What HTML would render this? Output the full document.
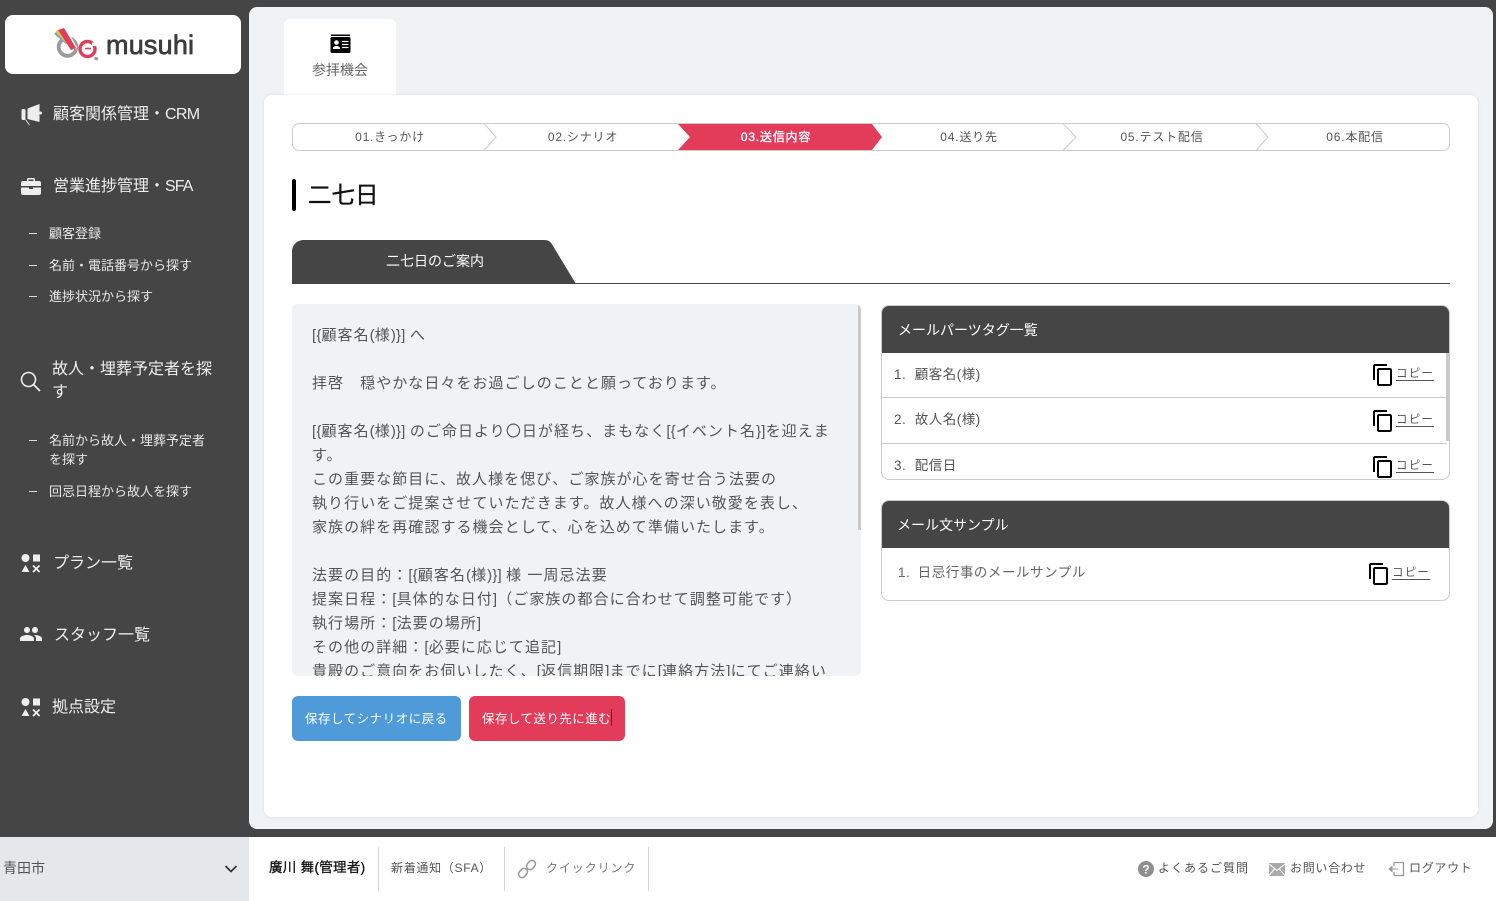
<!DOCTYPE html>
<html lang="ja">
<head>
<meta charset="utf-8">
<title>musuhi</title>
<style>
html,body{margin:0;padding:0}
body{width:1496px;height:901px;position:relative;overflow:hidden;background:#454545;font-family:"Liberation Sans","Noto Sans CJK JP",sans-serif;color:#555}
.a{position:absolute}
.t{position:absolute;white-space:nowrap;line-height:20px}
.s{color:#eee;font-size:16px}
.m{color:#e8e8e8;font-size:13px}
.d{position:absolute;left:29px;width:8px;height:1px;background:#ddd}
.st{font-size:12px;letter-spacing:.8px;color:#555;transform:translateX(-50%)}
.row{font-size:13.5px;color:#555;letter-spacing:.5px}
.cp{font-size:11.5px;letter-spacing:1.2px;color:#555;text-decoration:underline;text-underline-offset:3px}
.f{font-size:12px;color:#555}
.sep{position:absolute;top:847px;width:1px;height:44px;background:#d5d5d5}
.l{letter-spacing:.15px;font-style:normal}
svg{position:absolute;display:block}
</style>
</head>
<body>
<!-- logo -->
<div class="a" style="left:5px;top:15px;width:236px;height:59px;background:#fff;border-radius:8px"></div>
<svg style="left:50px;top:24px" width="52" height="40" viewBox="50 24 52 40">
<circle cx="67.500" cy="47" r="8.800" fill="none" stroke="#9b9b9b" stroke-width="3.800"/>
<circle cx="87.500" cy="49" r="7.500" fill="none" stroke="#e33c5b" stroke-width="3.400"/>
<path d="M92 42.500h5v3.500h-5z" fill="#fff"/>
<path d="M85 48.500h6" stroke="#e33c5b" stroke-width="1.500"/>
<path d="M54 34l3-3 12 11-3 2z" fill="#6fa9c9"/>
<path d="M55.500 32l2.500-2.500 11.500 13-2.500 1.500z" fill="#e8c23c"/>
<path d="M64 27l1.500-.5 11.500 21-1.500 1.500z" fill="#fff"/>
<path d="M58 30l6-2 12 20-5 2z" fill="#e33c5b"/>
<path d="M94.500 57l3.500.5-.5 3-3-1z" fill="#8a8a8a"/>
</svg>
<div class="t" style="left:106px;top:35px;font-size:27px;letter-spacing:.2px;color:#3c3c3c;-webkit-text-stroke:.7px #3c3c3c">musuhi</div>

<!-- sidebar -->
<svg style="left:20px;top:104px" width="24" height="24" viewBox="0 0 24 24"><rect x="1.500" y="5" width="4" height="11" rx="1.500" fill="#eee"/><path d="M7.500 4.500L19.500 0V18L7.500 15z" fill="#eee"/><circle cx="20.500" cy="9" r="1.500" fill="#eee"/><path d="M5.500 15.500l4 5.500" stroke="#ddd" fill="none"/></svg>
<div class="t s" style="left:53px;top:105px">顧客関係管理・<span style="letter-spacing:-.7px">CRM</span></div>
<svg style="left:20px;top:177px" width="22" height="19" viewBox="0 0 22 19"><path d="M7 4V2.500C7 1.600 7.600 1 8.500 1h5c.9 0 1.500.6 1.500 1.500V4h4c1 0 2 .8 2 2v3H1V6c0-1.200 1-2 2-2z" fill="#eee"/><path d="M1 10.500h8V12h4v-1.500h8V16c0 1.200-1 2-2 2H3c-1 0-2-.8-2-2z" fill="#eee"/><rect x="8.500" y="2.500" width="5" height="1.500" fill="#454545"/></svg>
<div class="t s" style="left:53px;top:177px">営業進捗管理・<span style="letter-spacing:-.9px">SFA</span></div>
<div class="d" style="top:233px"></div><div class="t m" style="left:49px;top:224px">顧客登録</div>
<div class="d" style="top:265px"></div><div class="t m" style="left:49px;top:256px">名前・電話番号から探す</div>
<div class="d" style="top:296px"></div><div class="t m" style="left:49px;top:287px">進捗状況から探す</div>
<svg style="left:20px;top:371px" width="21" height="21" viewBox="0 0 21 21"><circle cx="8.500" cy="8.500" r="7" fill="none" stroke="#eee" stroke-width="1.600"/><path d="M13.500 13.500l6.500 6.500" stroke="#eee" stroke-width="1.800"/></svg>
<div class="t s" style="left:52px;top:360px">故人・埋葬予定者を探</div>
<div class="t s" style="left:52px;top:383px">す</div>
<div class="d" style="top:440px"></div><div class="t m" style="left:49px;top:431px">名前から故人・埋葬予定者</div>
<div class="t m" style="left:49px;top:450px">を探す</div>
<div class="d" style="top:491px"></div><div class="t m" style="left:49px;top:482px">回忌日程から故人を探す</div>
<svg style="left:21px;top:554px" width="20" height="19" viewBox="0 0 20 19"><circle cx="4.500" cy="4" r="4" fill="#eee"/><rect x="12" y="0.500" width="7" height="7" fill="#eee"/><path d="M4.500 11l4 7H.5z" fill="#eee"/><path d="M12 11.500l6.500 6.500M18.500 11.500L12 18" stroke="#eee" stroke-width="1.800"/></svg>
<div class="t s" style="left:53px;top:554px">プラン一覧</div>
<svg style="left:19px;top:622px" width="24" height="24" viewBox="0 0 24 24"><path fill="#eee" d="M16 11c1.660 0 2.990-1.340 2.990-3S17.660 5 16 5c-1.660 0-3 1.340-3 3s1.340 3 3 3zm-8 0c1.660 0 2.990-1.340 2.990-3S9.660 5 8 5C6.340 5 5 6.340 5 8s1.340 3 3 3zm0 2c-2.330 0-7 1.170-7 3.500V19h14v-2.500c0-2.330-4.670-3.500-7-3.500zm8 0c-.29 0-.62.02-.97.05 1.160.84 1.970 1.970 1.970 3.450V19h6v-2.500c0-2.330-4.670-3.500-7-3.500z"/></svg>
<div class="t s" style="left:54px;top:626px">スタッフ一覧</div>
<svg style="left:21px;top:698px" width="20" height="19" viewBox="0 0 20 19"><circle cx="4.500" cy="4" r="4" fill="#eee"/><rect x="12" y="0.500" width="7" height="7" fill="#eee"/><path d="M4.500 11l4 7H.5z" fill="#eee"/><path d="M12 11.500l6.500 6.500M18.500 11.500L12 18" stroke="#eee" stroke-width="1.800"/></svg>
<div class="t s" style="left:52px;top:698px">拠点設定</div>

<!-- main panel -->
<div class="a" style="left:249px;top:7px;width:1244px;height:822px;background:#f1f2f4;border-radius:8px"></div>
<div class="a" style="left:284px;top:19px;width:112px;height:80px;background:#fff;border-radius:6px 6px 0 0"></div>
<svg style="left:330px;top:34px" width="21" height="20" viewBox="0 0 21 20"><rect x="1" y="0.500" width="19" height="1.500" fill="#000"/><rect x="0.500" y="3" width="20" height="16" rx="1.500" fill="#000"/><circle cx="6.500" cy="8.500" r="2.300" fill="#fff"/><path d="M2.800 15c0-2 1.700-3 3.700-3s3.700 1 3.700 3z" fill="#fff"/><path d="M12 7.500h6.500M12 10.500h6.500M12 13.500h6.500" stroke="#fff" stroke-width="1.200"/></svg>
<div class="t" style="left:312px;top:60px;font-size:14px;color:#666">参拝機会</div>
<div class="a" style="left:264px;top:95px;width:1214px;height:722px;background:#fff;border-radius:8px;box-shadow:0 0 4px rgba(0,0,0,.08)"></div>

<!-- steps -->
<div class="a" style="left:292px;top:123px;width:1156px;height:26px;border:1px solid #ccc;border-radius:7px"></div>
<svg style="left:292px;top:123px" width="1158" height="28" viewBox="292 123 1158 28">
<path d="M484 123.500L496 137L484 150.500" fill="#fff" stroke="#ccc"/>
<path d="M1063 123.500L1076 137L1063 150.500" fill="#fff" stroke="#ccc"/>
<path d="M1256 123.500L1268 137L1256 150.500" fill="#fff" stroke="#ccc"/>
<path d="M678 124H872L882 137L872 150H678L690 137Z" fill="#e33c5b"/>
</svg>
<div class="t st" style="left:390px;top:127px">01.きっかけ</div>
<div class="t st" style="left:583px;top:127px">02.シナリオ</div>
<div class="t st" style="left:776px;top:127px;color:#fff;-webkit-text-stroke:.35px #fff">03.送信内容</div>
<div class="t st" style="left:969px;top:127px">04.送り先</div>
<div class="t st" style="left:1162px;top:127px">05.テスト配信</div>
<div class="t st" style="left:1355px;top:127px">06.本配信</div>

<!-- heading -->
<div class="a" style="left:292px;top:179px;width:4px;height:32px;background:#000;border-radius:2px"></div>
<div class="t" style="left:308px;top:185px;font-size:23.500px;color:#111;-webkit-text-stroke:.35px #111">二七日</div>

<!-- tab -->
<svg style="left:292px;top:240px" width="1158" height="44" viewBox="0 0 1158 44">
<path d="M0 44V12C0 5 5 0 12 0H252C257 0 259 2 261 6L284 44Z" fill="#454545"/>
<rect x="0" y="43" width="1158" height="1" fill="#454545"/>
</svg>
<div class="t" style="left:386px;top:251px;font-size:14px;color:#fff">二七日のご案内</div>

<!-- textarea -->
<div class="a" style="left:292px;top:304px;width:569px;height:372px;background:#f1f2f4;border-radius:6px;overflow:hidden">
<div style="position:absolute;left:20px;top:20px;font-size:15px;line-height:24px;letter-spacing:1.050px;color:#555;white-space:nowrap"><i class="l">[{</i>顧客名<i class="l">(</i>様<i class="l">)}] </i>へ<br><br>拝啓　穏やかな日々をお過ごしのことと願っております。<br><br><i class="l">[{</i>顧客名<i class="l">(</i>様<i class="l">)}] </i>のご命日より〇日が経ち、まもなく<i class="l">[{</i>イベント名<i class="l">}]</i>を迎えま<br>す。<br>この重要な節目に、故人様を偲び、ご家族が心を寄せ合う法要の<br>執り行いをご提案させていただきます。故人様への深い敬愛を表し、<br>家族の絆を再確認する機会として、心を込めて準備いたします。<br><br>法要の目的：<i class="l">[{</i>顧客名<i class="l">(</i>様<i class="l">)}] </i>様 一周忌法要<br>提案日程：<i class="l">[</i>具体的な日付<i class="l">]</i>（ご家族の都合に合わせて調整可能です）<br>執行場所：<i class="l">[</i>法要の場所<i class="l">]</i><br>その他の詳細：<i class="l">[</i>必要に応じて追記<i class="l">]</i><br>貴殿のご意向をお伺いしたく、<i class="l">[</i>返信期限<i class="l">]</i>までに<i class="l">[</i>連絡方法<i class="l">]</i>にてご連絡い</div>
<div style="position:absolute;left:566px;top:0;width:3px;height:226px;background:#c9c9c9"></div>
</div>

<!-- buttons -->
<div class="a" style="left:292px;top:696px;width:169px;height:45px;background:#4f9bd9;border-radius:6px"></div>
<div class="t" style="left:305px;top:709px;font-size:12.500px;letter-spacing:.5px;color:#fff">保存してシナリオに戻る</div>
<div class="a" style="left:469px;top:696px;width:156px;height:45px;background:#e33c5b;border-radius:6px"></div>
<div class="t" style="left:482px;top:709px;font-size:12.500px;letter-spacing:.45px;color:#fff">保存して送り先に進む</div>
<div class="a" style="left:611px;top:709px;width:1px;height:17px;background:#333"></div>

<!-- tag panel -->
<div class="a" style="left:881px;top:305px;width:567px;height:173px;border:1px solid #ccc;border-radius:8px;overflow:hidden;background:#fff">
<div style="position:absolute;left:-1px;top:-1px;width:569px;height:48px;background:#454545"></div>
<div style="position:absolute;left:0;top:91px;width:565px;height:1px;background:#ccc"></div>
<div style="position:absolute;left:0;top:137px;width:565px;height:1px;background:#ccc"></div>
<div style="position:absolute;left:564px;top:47px;width:3px;height:88px;background:#c9c9c9"></div>
</div>
<div class="t" style="left:898px;top:320px;font-size:14px;color:#fff">メールパーツタグ一覧</div>
<div class="t row" style="left:894px;top:365px">1.&nbsp; 顧客名(様)</div>
<div class="t row" style="left:894px;top:410px">2.&nbsp; 故人名(様)</div>
<div class="t row" style="left:894px;top:456px">3.&nbsp; 配信日</div>
<svg style="left:1371px;top:363px" width="24" height="24" viewBox="0 0 24 24"><path fill="#000" d="M16 1H4c-1.100 0-2 .9-2 2v14h2V3h12V1zm3 4H8c-1.100 0-2 .9-2 2v14c0 1.100.9 2 2 2h11c1.100 0 2-.9 2-2V7c0-1.100-.9-2-2-2zm0 16H8V7h11v14z"/></svg>
<svg style="left:1371px;top:409px" width="24" height="24" viewBox="0 0 24 24"><path fill="#000" d="M16 1H4c-1.100 0-2 .9-2 2v14h2V3h12V1zm3 4H8c-1.100 0-2 .9-2 2v14c0 1.100.9 2 2 2h11c1.100 0 2-.9 2-2V7c0-1.100-.9-2-2-2zm0 16H8V7h11v14z"/></svg>
<svg style="left:1371px;top:455px" width="24" height="24" viewBox="0 0 24 24"><path fill="#000" d="M16 1H4c-1.100 0-2 .9-2 2v14h2V3h12V1zm3 4H8c-1.100 0-2 .9-2 2v14c0 1.100.9 2 2 2h11c1.100 0 2-.9 2-2V7c0-1.100-.9-2-2-2zm0 16H8V7h11v14z"/></svg>
<div class="t cp" style="left:1396px;top:364px">コピー</div>
<div class="t cp" style="left:1396px;top:410px">コピー</div>
<div class="t cp" style="left:1396px;top:456px">コピー</div>

<!-- sample panel -->
<div class="a" style="left:881px;top:500px;width:567px;height:99px;border:1px solid #ccc;border-radius:8px;overflow:hidden;background:#fff">
<div style="position:absolute;left:-1px;top:-1px;width:569px;height:48px;background:#454545"></div>
</div>
<div class="t" style="left:897px;top:515px;font-size:14px;color:#fff">メール文サンプル</div>
<div class="t row" style="left:898px;top:563px;color:#666;letter-spacing:.55px">1.&nbsp;<span style="margin-left:3px">日忌行事のメールサンプル</span></div>
<svg style="left:1367px;top:562px" width="24" height="24" viewBox="0 0 24 24"><path fill="#000" d="M16 1H4c-1.100 0-2 .9-2 2v14h2V3h12V1zm3 4H8c-1.100 0-2 .9-2 2v14c0 1.100.9 2 2 2h11c1.100 0 2-.9 2-2V7c0-1.100-.9-2-2-2zm0 16H8V7h11v14z"/></svg>
<div class="t cp" style="left:1392px;top:563px">コピー</div>

<!-- footer -->
<div class="a" style="left:0;top:837px;width:1496px;height:64px;background:#fff"></div>
<div class="a" style="left:0;top:837px;width:249px;height:64px;background:#e6e7ea"></div>
<div class="t" style="left:3px;top:858px;font-size:14px;color:#555">青田市</div>
<svg style="left:224px;top:864px" width="14" height="10" viewBox="0 0 14 10"><path d="M1.500 2l5.500 5.500L12.500 2" fill="none" stroke="#333" stroke-width="1.700"/></svg>
<div class="t" style="left:269px;top:858px;font-size:13.500px;letter-spacing:.3px;color:#111;-webkit-text-stroke:.3px #111">廣川 舞(管理者)</div>
<div class="sep" style="left:378px"></div>
<div class="t f" style="left:391px;top:858px;letter-spacing:.7px">新着通知（SFA）</div>
<div class="sep" style="left:504px"></div>
<svg style="left:516px;top:858px" width="22" height="22" viewBox="0 0 22 22"><g fill="none" stroke="#999" stroke-width="1.500"><rect x="-5" y="-3.500" width="10" height="7" rx="3.500" transform="translate(7 15) rotate(-50)"/><rect x="-5" y="-3.500" width="10" height="7" rx="3.500" transform="translate(15 7) rotate(-50)"/></g></svg>
<div class="t f" style="left:546px;top:858px;letter-spacing:.9px;color:#777">クイックリンク</div>
<div class="sep" style="left:648px"></div>
<svg style="left:1138px;top:861px" width="16" height="16" viewBox="0 0 16 16"><circle cx="8" cy="8" r="8" fill="#8e8e8e"/><text x="8" y="12.500" text-anchor="middle" font-family="Liberation Sans" font-weight="700" font-size="12" fill="#fff">?</text></svg>
<div class="t f" style="left:1158px;top:858px;letter-spacing:1px">よくあるご質問</div>
<svg style="left:1269px;top:863px" width="16" height="13" viewBox="0 0 16 13"><rect width="16" height="13" fill="#aaa"/><path d="M0 1l8 6.500L16 1M0 12.500l5.500-6.500M16 12.500L10.500 6" fill="none" stroke="#fff"/></svg>
<div class="t f" style="left:1290px;top:858px;letter-spacing:.7px">お問い合わせ</div>
<svg style="left:1388px;top:861px" width="17" height="16" viewBox="0 0 17 16"><path d="M6 1.500h9.500v13H6M6 5v-3.500M6 14.500V11" fill="none" stroke="#999" stroke-width="1.300"/><path d="M1 8h9M1 8l3-2.500v5z" fill="#999" stroke="#999"/></svg>
<div class="t f" style="left:1409px;top:858px;letter-spacing:.7px">ログアウト</div>
</body>
</html>
